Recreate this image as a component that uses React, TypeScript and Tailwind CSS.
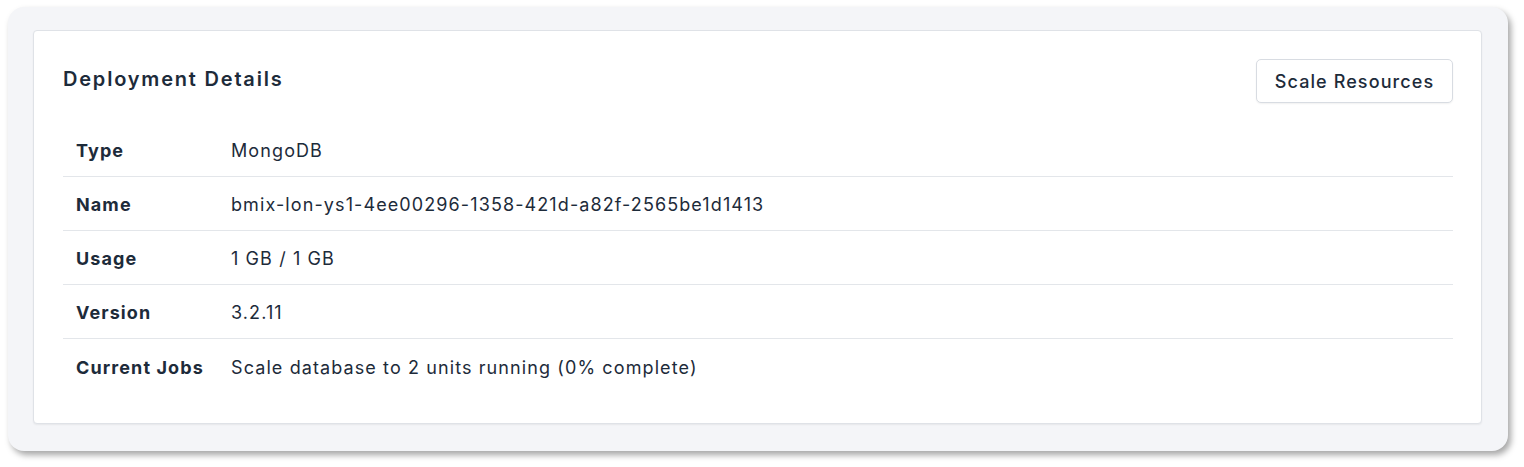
import React from "react";

const rows: [string, string][] = [
  ["Type", "MongoDB"],
  ["Name", "bmix-lon-ys1-4ee00296-1358-421d-a82f-2565be1d1413"],
  ["Usage", "1 GB / 1 GB"],
  ["Version", "3.2.11"],
  ["Current Jobs", "Scale database to 2 units running (0% complete)"],
];

export default function App() {
  return (
    <div
      className="w-[1524px] h-[467px] bg-white pl-[8px] pt-[7px]"
      style={{ fontFamily: "Inter, 'Noto Sans', sans-serif" }}
    >
      <div className="w-[1500px] h-[444px] rounded-[16px] bg-[#f4f5f8] pl-[25px] pt-[23px] shadow-[3px_4px_6px_rgba(0,0,0,0.35)]">
        <div className="w-[1449px] h-[394px] bg-white rounded-[4px] border border-[#dfe2e7] shadow-[0_1px_2px_rgba(0,0,0,0.06)] pl-[29px] pr-[28px] pt-[28px] text-[#1d2b3a]">
          <div className="flex items-center justify-between">
            <h2 className="text-[20px] font-semibold leading-none mt-[-4px] tracking-[1.8px]">
              Deployment Details
            </h2>
            <button className="h-[44px] w-[197px] rounded-[5px] border border-[#d8dce2] bg-white text-[18px] font-medium tracking-[1.1px] shadow-[0_1px_2px_rgba(0,0,0,0.06)]">
              Scale Resources
            </button>
          </div>
          <div className="mt-[20px] flex flex-col">
            {rows.map(([k, v], i) => (
              <div
                key={k}
                className={
                  "flex h-[54px] items-center pt-[2px] " +
                  (i < rows.length - 1 ? "border-b border-[#e3e6ea]" : "")
                }
              >
                <div className="w-[168px] shrink-0 pl-[13px] text-[18px] font-bold tracking-[1.1px] whitespace-nowrap">
                  {k}
                </div>
                <div className="text-[18px] tracking-[1.1px] whitespace-nowrap">{v}</div>
              </div>
            ))}
          </div>
        </div>
      </div>
    </div>
  );
}
